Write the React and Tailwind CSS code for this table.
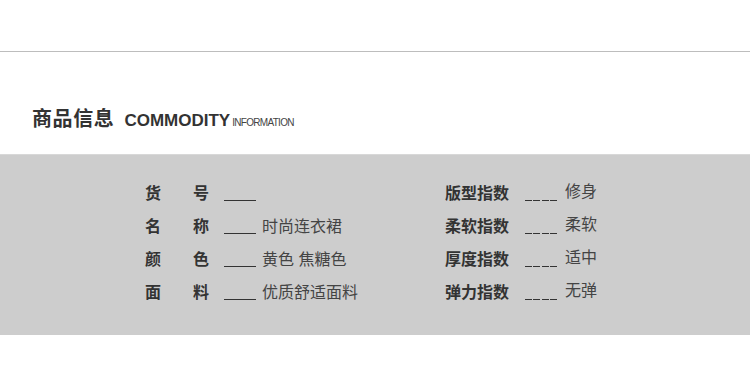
const font = { fontFamily: '"Liberation Sans", "Noto Sans CJK SC", sans-serif' };

const leftRows = [
  ['货', '号', ''],
  ['名', '称', '时尚连衣裙'],
  ['颜', '色', '黄色 焦糖色'],
  ['面', '料', '优质舒适面料'],
];

const rightRows = [
  ['版型指数', '修身'],
  ['柔软指数', '柔软'],
  ['厚度指数', '适中'],
  ['弹力指数', '无弹'],
];

export default function App() {
  return (
    <div className="w-[750px] h-[368px] bg-white overflow-hidden" style={font}>
      <div className="h-[51px]" />
      <div className="h-px bg-[#bdbdbd]" />

      <div className="h-[102px] flex items-end pb-[25px] pl-[32px]">
        <div className="flex items-baseline">
          <h1 className="text-[20px] font-bold text-[#333] leading-none tracking-[0.6px]">商品信息</h1>
          <span className="ml-[10px] text-[17px] font-bold text-[#333] leading-none">COMMODITY</span>
          <span className="ml-[2px] text-[10px] text-[#444] leading-none tracking-[-0.7px]">INFORMATION</span>
        </div>
      </div>

      <div className="h-[181px] bg-[#cdcdcd] border-t border-[#d8d8d8] pt-[22px] pl-[145px] flex">
        <div className="w-[300px] flex flex-col">
          {leftRows.map(([a, b, v]) => (
            <div key={a} className="h-[33px] flex items-center">
              <div className="w-[64px] flex justify-between text-[16px] font-bold text-[#333]">
                <span>{a}</span>
                <span>{b}</span>
              </div>
              <div className="ml-[15px] w-[32px] h-[14px] border-b border-[#333] self-start mt-[10px]" />
              <span className="ml-[6px] text-[16px] text-[#444]">{v}</span>
            </div>
          ))}
        </div>

        <div className="flex flex-col">
          {rightRows.map(([a, v]) => (
            <div key={a} className="h-[33px] flex items-center">
              <div className="w-[65px] text-[16px] font-bold text-[#333] whitespace-nowrap">{a}</div>
              <div className="ml-[15px] w-[32px] flex gap-[1.5px] self-start mt-[23px]">
                <div className="h-px flex-1 bg-[#333]" />
                <div className="h-px flex-1 bg-[#333]" />
                <div className="h-px flex-1 bg-[#333]" />
                <div className="h-px flex-1 bg-[#333]" />
              </div>
              <span className="ml-[8px] text-[16px] text-[#444] -mt-[3px]">{v}</span>
            </div>
          ))}
        </div>
      </div>
    </div>
  );
}
